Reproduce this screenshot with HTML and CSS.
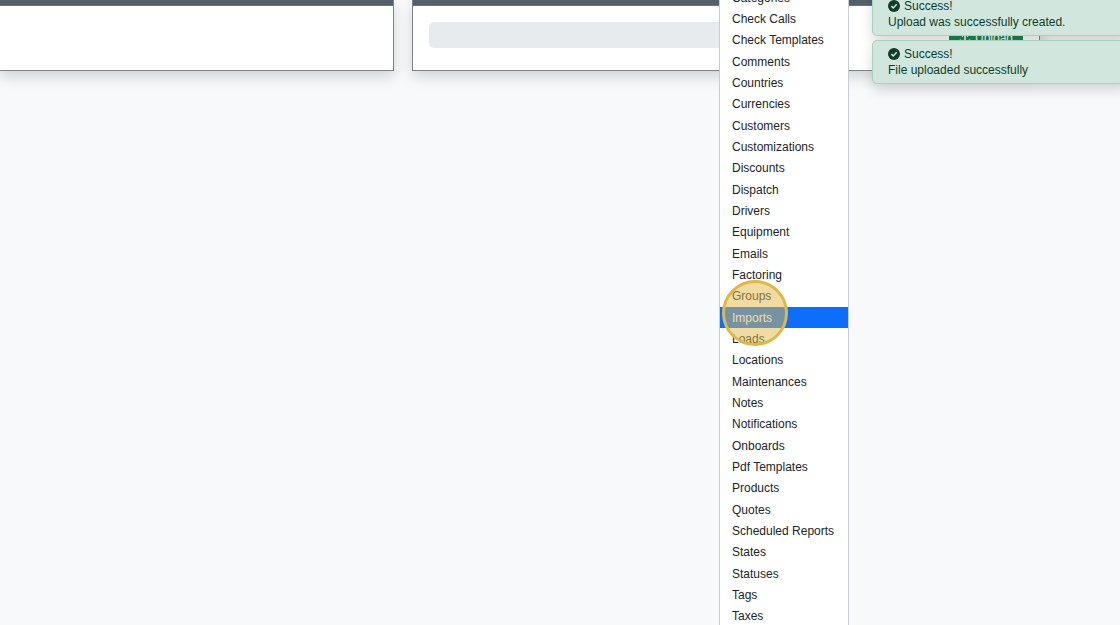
FILE: index.html
```
<!doctype html>
<html lang="en">
<head>
    <meta charset="UTF-8">
    <title>Uploads</title>
    <link rel="stylesheet" href="styles.css">
</head>
<body>
    <main class="page">
        <section class="card">
            <div class="card-header"></div>
            <div class="card-body"></div>
        </section>
        <section class="card">
            <div class="card-header"></div>
            <form class="card-body">
                <input class="file-name" type="text" aria-label="File" disabled>
                <button class="upload-button" type="button">
                    <svg width="12" height="12" viewBox="0 0 16 16" aria-hidden="true">
                        <path d="M8 11V2M4 6l4-4 4 4M2 10v4h12v-4" fill="none" stroke="currentColor" stroke-width="2"/>
                    </svg>
                    Upload
                </button>
            </form>
        </section>
    </main>

    <nav class="menu">
        <a href="#">Categories</a>
        <a href="#">Check Calls</a>
        <a href="#">Check Templates</a>
        <a href="#">Comments</a>
        <a href="#">Countries</a>
        <a href="#">Currencies</a>
        <a href="#">Customers</a>
        <a href="#">Customizations</a>
        <a href="#">Discounts</a>
        <a href="#">Dispatch</a>
        <a href="#">Drivers</a>
        <a href="#">Equipment</a>
        <a href="#">Emails</a>
        <a href="#">Factoring</a>
        <a href="#">Groups</a>
        <a href="#" class="active">Imports</a>
        <a href="#">Loads</a>
        <a href="#">Locations</a>
        <a href="#">Maintenances</a>
        <a href="#">Notes</a>
        <a href="#">Notifications</a>
        <a href="#">Onboards</a>
        <a href="#">Pdf Templates</a>
        <a href="#">Products</a>
        <a href="#">Quotes</a>
        <a href="#">Scheduled Reports</a>
        <a href="#">States</a>
        <a href="#">Statuses</a>
        <a href="#">Tags</a>
        <a href="#">Taxes</a>
    </nav>
    <div class="click-marker"></div>

    <div class="toasts">
        <div class="toast" role="status">
            <div class="toast-title">
                <svg width="12" height="12" viewBox="0 0 16 16" aria-hidden="true">
                    <circle cx="8" cy="8" r="8" fill="currentColor"/>
                    <path d="M4.5 8.2l2.5 2.5 4.6-4.9" fill="none" stroke="#d1e7dd" stroke-width="2"/>
                </svg>
                Success!
            </div>
            <div>Upload was successfully created.</div>
        </div>
        <div class="toast" role="status">
            <div class="toast-title">
                <svg width="12" height="12" viewBox="0 0 16 16" aria-hidden="true">
                    <circle cx="8" cy="8" r="8" fill="currentColor"/>
                    <path d="M4.5 8.2l2.5 2.5 4.6-4.9" fill="none" stroke="#d1e7dd" stroke-width="2"/>
                </svg>
                Success!
            </div>
            <div>File uploaded successfully</div>
        </div>
    </div>
</body>
</html>
```
FILE: styles.css
```
* {
    box-sizing: border-box;
}
body {
    margin: 0;
    min-height: 100vh;
    position: relative;
    overflow: hidden;
    font-family: "Liberation Sans", Arial, sans-serif;
    font-size: 12px;
    line-height: 16px;
    color: #212529;
    background-color: #f8f9fb;
}
.page {
    display: grid;
    grid-template-columns: 395fr 628fr;
    gap: 18px;
    padding-right: 80px;
    margin-left: -1px;
}
.card {
    background-color: white;
    border: 1px solid #7f8487;
    border-top: none;
    box-shadow: 0 6px 13px rgba(0,0,0,0.15);
}
.card-header {
    height: 6px;
    background-color: #53616d;
    border-bottom: 1px solid #6f757a;
}
.card-body {
    display: flex;
    justify-content: space-between;
    padding: 16px 16px 16px;
}
.file-name {
    width: 60%;
    height: 26px;
    border: none;
    border-radius: 5px;
    background-color: #e8ebee;
}
.upload-button {
    display: flex;
    align-items: center;
    justify-content: center;
    gap: 4px;
    width: 74px;
    height: 32px;
    padding: 0;
    border: none;
    border-radius: 5px;
    font: inherit;
    color: white;
    background-color: #198754;
    cursor: pointer;
}
.menu {
    position: absolute;
    top: -13px;
    bottom: -2px;
    left: 719px;
    width: 130px;
    display: flex;
    flex-direction: column;
    border: 1px solid #c9cccf;
    border-width: 0 1px;
    background-color: white;
}
.menu a {
    flex: 1;
    display: flex;
    align-items: center;
    padding: 0 12px;
    color: #212529;
    text-decoration: none;
    white-space: nowrap;
}
.menu a.active {
    color: white;
    background-color: #0d6efd;
}
.click-marker {
    position: absolute;
    top: 280px;
    left: 722px;
    width: 66px;
    height: 66px;
    border: 3px solid #e0b848;
    border-radius: 50%;
    background-color: rgba(226,184,72,0.5);
}
.toasts {
    position: absolute;
    top: -8px;
    right: -8px;
    width: 256px;
    display: flex;
    flex-direction: column;
    gap: 4px;
}
.toast {
    padding: 5px 15px;
    border: 1px solid #a9cfbd;
    border-radius: 5px;
    color: #0f3d27;
    background-color: #d1e7dd;
    box-shadow: 0 6px 13px rgba(0,0,0,0.15);
}
.toast-title {
    display: flex;
    align-items: center;
    gap: 4px;
}
```
